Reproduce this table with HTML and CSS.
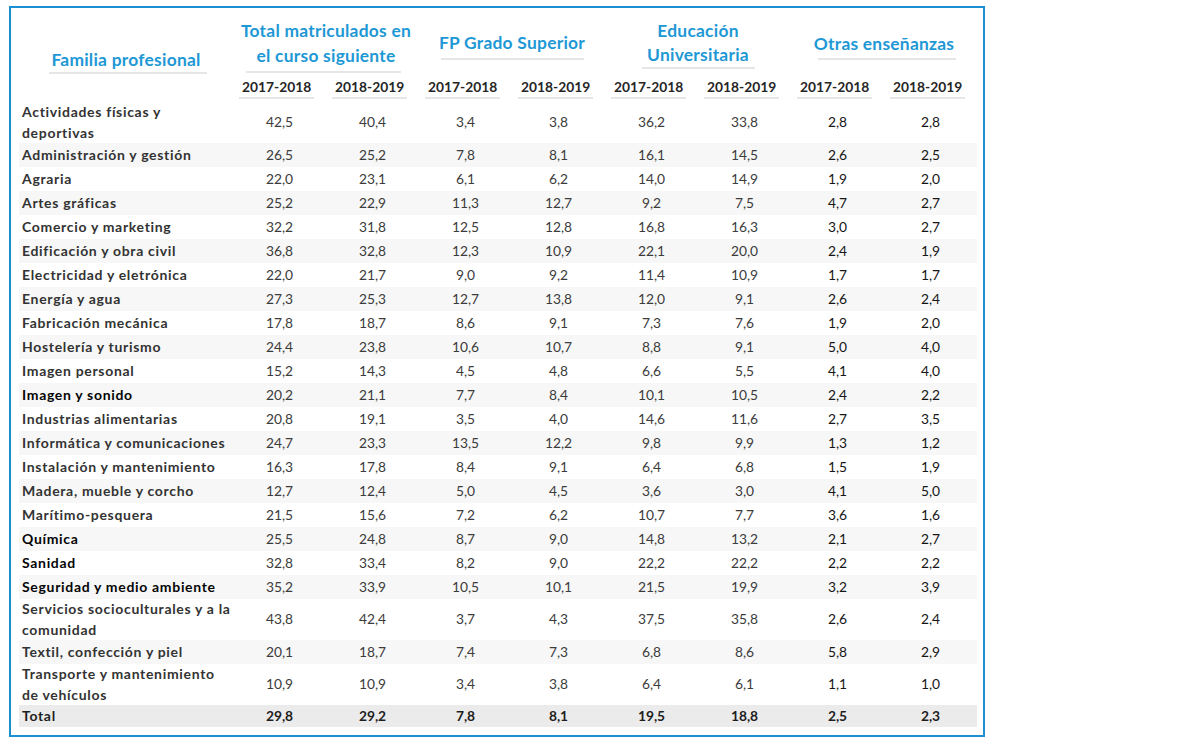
FILE: index.html
```html
<!DOCTYPE html>
<html lang="es">
<head>
<meta charset="utf-8">
<title>Matriculados por familia profesional</title>
<link rel="stylesheet" href="styles.css">
</head>
<body>
<div class="frame">
  <div class="tbl">
    <div class="head-groups">
      <div class="gcell gcell--fam"><span class="glabel glabel--fam">Familia profesional</span></div>
      <div class="gcell gcell--total"><span class="glabel glabel--total">Total matriculados en<br>el curso siguiente</span></div>
      <div class="gcell gcell--fp"><span class="glabel glabel--fp">FP Grado Superior</span></div>
      <div class="gcell gcell--uni"><span class="glabel glabel--uni">Educación<br>Universitaria</span></div>
      <div class="gcell gcell--otras"><span class="glabel glabel--otras">Otras enseñanzas</span></div>
    </div>
    <div class="head-years">
      <div class="ycell ycell--blank"></div>
      <div class="ycell"><span class="ylabel">2017-2018</span></div>
      <div class="ycell"><span class="ylabel">2018-2019</span></div>
      <div class="ycell"><span class="ylabel">2017-2018</span></div>
      <div class="ycell"><span class="ylabel">2018-2019</span></div>
      <div class="ycell"><span class="ylabel">2017-2018</span></div>
      <div class="ycell"><span class="ylabel">2018-2019</span></div>
      <div class="ycell"><span class="ylabel">2017-2018</span></div>
      <div class="ycell"><span class="ylabel">2018-2019</span></div>
    </div>
    <div class="rows" id="rows"></div>
  </div>
</div>
<script src="app.js"></script>
</body>
</html>
```

FILE: styles.css
```css
html, body {
  margin: 0;
  padding: 0;
  background: #ffffff;
}
body {
  font-family: Lato, "Open Sans", "Liberation Sans", sans-serif;
  color: #333333;
}
.frame {
  box-sizing: border-box;
  width: 976px;
  height: 731px;
  margin: 6px 0 0 9px;
  border: 2px solid #1b8fd2;
  padding: 0 6px 0 8px;
}
.tbl {
  width: 958px;
}
.head-groups,
.head-years,
.row {
  display: grid;
  grid-template-columns: 214px repeat(8, 93px);
}
.head-groups {
  height: 68px;
}
.gcell {
  display: flex;
  justify-content: center;
  align-items: flex-start;
}
.gcell--total, .gcell--fp, .gcell--uni, .gcell--otras {
  grid-column: span 2;
}
.glabel {
  display: block;
  color: #1e98d5;
  font-weight: 700;
  font-size: 17.4px;
  letter-spacing: 0.25px;
  line-height: 25px;
  text-align: center;
  white-space: nowrap;
}
.glabel::after {
  content: "";
  display: block;
  height: 2px;
  background: #e6e6e6;
  margin-left: auto;
  margin-right: auto;
}
.glabel--fam { margin-top: 40px; line-height: 24px; }
.glabel--fam::after { width: 158px; transform: translateX(2px); }
.glabel--total { margin-top: 10px; }
.glabel--total::after { width: 155px; margin-top: 3px; transform: translateX(-3px); }
.glabel--fp { margin-top: 22px; }
.glabel--fp::after { width: 143px; margin-top: 3px; }
.glabel--uni { margin-top: 11px; line-height: 24px; }
.glabel--uni::after { width: 113px; margin-top: 0; }
.glabel--otras { margin-top: 23px; }
.glabel--otras::after { width: 138px; margin-top: 2px; transform: translateX(3px); }

.head-years {
  height: 26px;
}
.ycell {
  display: flex;
  justify-content: center;
  align-items: flex-start;
  padding-top: 1px;
}
.ylabel {
  display: block;
  font-weight: 700;
  font-size: 13.8px;
  line-height: 20px;
  color: #262626;
  white-space: nowrap;
}
.ylabel::after {
  content: "";
  display: block;
  width: 75px;
  height: 2px;
  background: #e6e6e6;
  margin: 0 auto;
  transform: translateX(-3px);
}

.row {
  min-height: 24px;
  font-size: 13.8px;
  line-height: 20.5px;
}
.row:nth-child(even) {
  background: #f7f7f7;
}
.row--total {
  height: 22px;
  min-height: 22px;
  background: #ebebeb !important;
  font-weight: 700;
}
.cell {
  display: flex;
  align-items: center;
  justify-content: center;
  white-space: nowrap;
  color: #3c3c3c;
}
.cell--name {
  justify-content: flex-start;
  padding-left: 3px;
  font-size: 14px;
  letter-spacing: 0.68px;
  font-weight: 700;
  color: #333333;
}
.cell--strong {
  color: #050505;
}
.cell--dark {
  color: #161616;
}
.row--total .cell {
  color: #1e1e1e;
}
```

FILE: app.js
```javascript
var data = [
  ["Actividades físicas y<br>deportivas", "42,5","40,4","3,4","3,8","36,2","33,8","2,8","2,8"],
  ["Administración y gestión", "26,5","25,2","7,8","8,1","16,1","14,5","2,6","2,5"],
  ["Agraria", "22,0","23,1","6,1","6,2","14,0","14,9","1,9","2,0"],
  ["Artes gráficas", "25,2","22,9","11,3","12,7","9,2","7,5","4,7","2,7"],
  ["Comercio y marketing", "32,2","31,8","12,5","12,8","16,8","16,3","3,0","2,7"],
  ["Edificación y obra civil", "36,8","32,8","12,3","10,9","22,1","20,0","2,4","1,9"],
  ["Electricidad y eletrónica", "22,0","21,7","9,0","9,2","11,4","10,9","1,7","1,7"],
  ["Energía y agua", "27,3","25,3","12,7","13,8","12,0","9,1","2,6","2,4"],
  ["Fabricación mecánica", "17,8","18,7","8,6","9,1","7,3","7,6","1,9","2,0"],
  ["Hostelería y turismo", "24,4","23,8","10,6","10,7","8,8","9,1","5,0","4,0"],
  ["Imagen personal", "15,2","14,3","4,5","4,8","6,6","5,5","4,1","4,0"],
  ["*Imagen y sonido", "20,2","21,1","7,7","8,4","10,1","10,5","2,4","2,2"],
  ["Industrias alimentarias", "20,8","19,1","3,5","4,0","14,6","11,6","2,7","3,5"],
  ["Informática y comunicaciones", "24,7","23,3","13,5","12,2","9,8","9,9","1,3","1,2"],
  ["Instalación y mantenimiento", "16,3","17,8","8,4","9,1","6,4","6,8","1,5","1,9"],
  ["Madera, mueble y corcho", "12,7","12,4","5,0","4,5","3,6","3,0","4,1","5,0"],
  ["Marítimo-pesquera", "21,5","15,6","7,2","6,2","10,7","7,7","3,6","1,6"],
  ["*Química", "25,5","24,8","8,7","9,0","14,8","13,2","2,1","2,7"],
  ["*Sanidad", "32,8","33,4","8,2","9,0","22,2","22,2","2,2","2,2"],
  ["*Seguridad y medio ambiente", "35,2","33,9","10,5","10,1","21,5","19,9","3,2","3,9"],
  ["Servicios socioculturales y a la<br>comunidad", "43,8","42,4","3,7","4,3","37,5","35,8","2,6","2,4"],
  ["Textil, confección y piel", "20,1","18,7","7,4","7,3","6,8","8,6","5,8","2,9"],
  ["Transporte y mantenimiento<br>de vehículos", "10,9","10,9","3,4","3,8","6,4","6,1","1,1","1,0"],
  ["#Total", "29,8","29,2","7,8","8,1","19,5","18,8","2,5","2,3"]
];
var rows = document.getElementById("rows");
var html = "";
data.forEach(function (r) {
  var name = r[0];
  var strong = false, total = false;
  if (name.charAt(0) === "*") { strong = true; name = name.slice(1); }
  if (name.charAt(0) === "#") { total = true; strong = true; name = name.slice(1); }
  html += '<div class="row' + (total ? ' row--total' : '') + '">';
  html += '<div class="cell cell--name' + (strong ? ' cell--strong' : '') + '"><span>' + name + '</span></div>';
  for (var i = 1; i < r.length; i++) {
    html += '<div class="cell' + (i >= 7 ? ' cell--dark' : '') + '">' + r[i] + '</div>';
  }
  html += '</div>';
});
rows.innerHTML = html;
```
